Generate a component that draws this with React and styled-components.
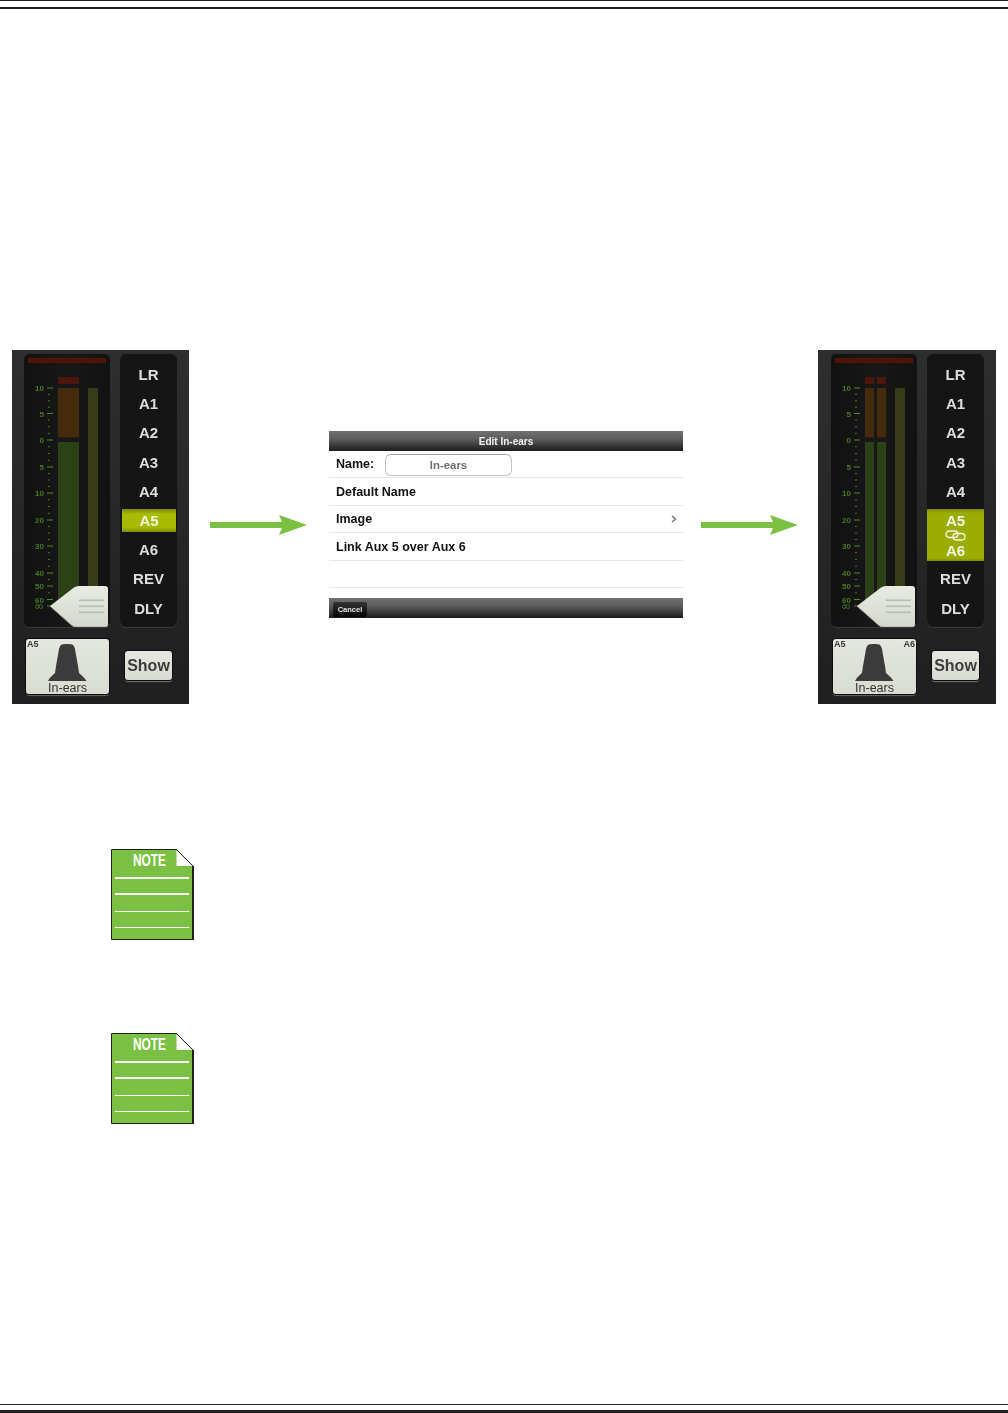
import React from "react";
import styled, { createGlobalStyle } from "styled-components";

const Global = createGlobalStyle`
  html, body {
    margin: 0;
    padding: 0;
    background: #fff;
    font-family: "Liberation Sans", Arial, sans-serif;
  }
`;

const SCALE = [
  ["10", 34],
  ["5", 59.5],
  ["0", 86],
  ["5", 113],
  ["10", 139],
  ["20", 166],
  ["30", 192],
  ["40", 219],
  ["50", 232],
  ["60", 245.5],
];

function minorTicks() {
  const out = [];
  for (let i = 0; i < SCALE.length - 1; i++) {
    const from = SCALE[i][1];
    const to = SCALE[i + 1][1];
    const count = to - from > 20 ? 3 : 1;
    for (let n = 1; n <= count; n++) {
      out.push(from + ((to - from) * n) / (count + 1));
    }
  }
  return out;
}

function Meter({ stereo }) {
  const bars = stereo ? [[34, 9], [46, 9]] : [[34, 21]];
  const knob = stereo ? "knobB" : "knobA";
  return (
    <MeterBox>
      <svg width="86" height="273" viewBox="0 0 86 273">
        <defs>
          <linearGradient id={knob} x1="0" y1="0" x2="0" y2="1">
            <stop offset="0" stopColor="#e9ece4" />
            <stop offset="1" stopColor="#d3d7cd" />
          </linearGradient>
        </defs>
        <rect x="4" y="4" width="78" height="5" fill="#4c1508" />
        {bars.map(([x, w]) => (
          <g key={x}>
            <rect x={x} y="23" width={w} height="7" fill="#4b180b" />
            <rect x={x} y="34" width={w} height="49.5" fill="#452a0c" />
            <rect x={x} y="88" width={w} height="160" fill="#2d4116" />
          </g>
        ))}
        <rect x="64" y="34" width="10" height="200" fill="#383b18" />
        {SCALE.map(([label, y], i) => (
          <g key={i}>
            <text x="20" y={y + 3} textAnchor="end" fontSize="8" fontWeight="700" fill="#4a7a20" fontFamily="Liberation Sans">
              {label}
            </text>
            <rect x="23" y={y - 0.5} width="6" height="1" fill="#558a26" />
          </g>
        ))}
        {minorTicks().map((y) => (
          <rect key={y} x="24" y={y - 0.5} width="2" height="1" fill="#4a7a20" />
        ))}
        <text x="20" y="256" textAnchor="end" fontSize="12" fill="#4a7a20" fontFamily="DejaVu Sans">
          ∞
        </text>
        <rect x="23" y="251.5" width="4" height="1" fill="#558a26" />
        <path
          d="M26 252 L50 233.5 Q52 232 55 232 H81 Q84 232 84 235 V270 Q84 273 81 273 H52 Q50 273 48 271.5 Z"
          fill={`url(#${knob})`}
        />
        <path d="M26.5 252.5 L48 271.5 Q50 273 52 273 H81 Q84 273 84 270" fill="none" stroke="#a8aca2" strokeWidth="1" />
        <rect x="55" y="245.5" width="25" height="1.6" fill="#b7bbb1" />
        <rect x="55" y="251.5" width="25" height="1.6" fill="#b7bbb1" />
        <rect x="55" y="257.5" width="25" height="1.6" fill="#b7bbb1" />
      </svg>
    </MeterBox>
  );
}

function Silhouette() {
  return (
    <svg width="39" height="37" viewBox="0 0 39 37">
      <path
        d="M13 1 Q14 0 19 0 Q24 0 25 1 Q27 3 27.5 8 L30 22 L31 29 C33 31 36 33 38.5 37 H0 C2 33 5 31 7 29 L8 22 L10.5 8 Q11 3 13 1 Z"
        fill="#3b3b3b"
      />
    </svg>
  );
}

function LinkGlyph() {
  return (
    <svg width="21" height="11" viewBox="0 0 21 11">
      <rect x="1" y="1" width="12" height="6.5" rx="3.2" fill="none" stroke="#f4f6e4" strokeWidth="1.3" />
      <rect x="8" y="3.5" width="12" height="6.5" rx="3.2" fill="none" stroke="#f4f6e4" strokeWidth="1.3" />
    </svg>
  );
}

function Mixer({ stereo }) {
  const before = ["LR", "A1", "A2", "A3", "A4"];
  const after = stereo ? ["REV", "DLY"] : ["A6", "REV", "DLY"];
  return (
    <Panel $wide={stereo}>
      <Meter stereo={stereo} />
      <Strip>
        {before.map((c) => (
          <Channel key={c}>{c}</Channel>
        ))}
        {stereo ? (
          <LinkedChannel>
            <span>A5</span>
            <LinkGlyph />
            <span>A6</span>
          </LinkedChannel>
        ) : (
          <ActiveChannel>A5</ActiveChannel>
        )}
        {after.map((c) => (
          <Channel key={c}>{c}</Channel>
        ))}
      </Strip>
      <Thumb>
        <ThumbTag>A5</ThumbTag>
        {stereo && <ThumbTag $right>A6</ThumbTag>}
        <Silhouette />
        <ThumbName>In-ears</ThumbName>
      </Thumb>
      <ShowButton>Show</ShowButton>
    </Panel>
  );
}

function Arrow({ gap }) {
  return (
    <ArrowWrap $gap={gap}>
      <svg width="97" height="22" viewBox="0 0 97 22">
        <path d="M0 8 H72 L69 1 L97 11 L69 21 L72 14 H0 Z" fill="#7ac143" />
      </svg>
    </ArrowWrap>
  );
}

function EditDialog() {
  return (
    <Dialog>
      <DialogBar>Edit In-ears</DialogBar>
      <Row $h={27}>
        <RowLabel>Name:</RowLabel>
        <NameField>In-ears</NameField>
      </Row>
      <Row $low>
        <RowLabel>Default Name</RowLabel>
      </Row>
      <Row $low>
        <RowLabel>Image</RowLabel>
        <Chevron width="6" height="8" viewBox="0 0 6 8">
          <path d="M1 1 L4.5 4 L1 7" fill="none" stroke="#777" strokeWidth="1.5" />
        </Chevron>
      </Row>
      <Row $low>
        <RowLabel>Link Aux 5 over Aux 6</RowLabel>
      </Row>
      <Row />
      <DialogGap />
      <DialogFoot>
        <CancelButton>Cancel</CancelButton>
      </DialogFoot>
    </Dialog>
  );
}

function NoteIcon() {
  return (
    <NoteWrap>
      <svg width="84" height="92" viewBox="0 0 84 92">
        <path d="M0.5 0.5 H65.5 L82 17 V90.5 H0.5 Z" fill="#7ac143" stroke="#231f20" strokeWidth="1" />
        <path d="M65.5 1 V17 H81.5 Z" fill="#fff" />
        <path d="M65.5 0.5 L82 17" stroke="#231f20" strokeWidth="1" />
        <rect x="81" y="17" width="2" height="74" fill="#231f20" />
        <rect x="4" y="28" width="74" height="2" fill="#fff" />
        <rect x="4" y="44" width="74" height="2" fill="#fff" />
        <rect x="4" y="62" width="74" height="1" fill="#fff" />
        <rect x="4" y="78" width="74" height="1" fill="#fff" />
        <text
          x="22"
          y="17"
          fontSize="16"
          fontWeight="700"
          fill="#fff"
          fontFamily="Liberation Sans Narrow, Liberation Sans, sans-serif"
          textLength="33"
          lengthAdjust="spacingAndGlyphs"
        >
          NOTE
        </text>
      </svg>
    </NoteWrap>
  );
}

export default function App() {
  return (
    <Page>
      <Global />
      <ThinRule />
      <ThickRule $top={6} $h={2} />
      <Diagram>
        <Mixer />
        <Arrow gap={21} />
        <EditDialog />
        <Arrow gap={18} />
        <RightSlot>
          <Mixer stereo />
        </RightSlot>
      </Diagram>
      <Notes>
        <NoteIcon />
        <NoteIcon />
      </Notes>
      <Footer>
        <ThinRule />
        <ThickRule $top={5} $h={3} />
      </Footer>
    </Page>
  );
}

const Page = styled.div`
  width: 1008px;
  height: 1413px;
  overflow: hidden;
  display: flex;
  flex-direction: column;
  background: #fff;
`;

const ThinRule = styled.div`
  height: 1px;
  background: #231f20;
`;

const ThickRule = styled.div`
  height: ${(p) => p.$h}px;
  margin-top: ${(p) => p.$top}px;
  background: #231f20;
`;

const Diagram = styled.div`
  display: flex;
  align-items: flex-start;
  margin-top: 341px;
  padding-left: 12px;
`;

const RightSlot = styled.div`
  margin-left: 20px;
`;

const Panel = styled.div`
  width: ${(p) => (p.$wide ? 178 : 177)}px;
  height: 354px;
  box-sizing: border-box;
  padding: 4px 0 0 ${(p) => (p.$wide ? 13 : 12)}px;
  display: grid;
  grid-template-columns: 86px 57px;
  grid-template-rows: 273px auto;
  column-gap: 10px;
  row-gap: 12px;
  background: linear-gradient(180deg, #2e2e2e 0%, #272727 50%, #1f1f1f 100%);
  filter: blur(0.35px);
`;

const MeterBox = styled.div`
  width: 86px;
  height: 273px;
  border-radius: 5px;
  background: linear-gradient(90deg, #111, #181818 50%, #121212);
  box-shadow: 0 1px 0 #3a3a3a;
  svg {
    display: block;
  }
`;

const Strip = styled.div`
  box-sizing: border-box;
  height: 273px;
  padding-top: 6px;
  display: flex;
  flex-direction: column;
  border-radius: 6px;
  background: #151515;
  box-shadow: 0 1px 0 #3a3a3a;
`;

const Channel = styled.div`
  height: 29.2px;
  flex: none;
  display: flex;
  align-items: center;
  justify-content: center;
  font-size: 15px;
  font-weight: 700;
  color: #dededa;
`;

const ActiveChannel = styled(Channel)`
  margin: 0 1px 0 2px;
  color: #f1f4da;
  background: linear-gradient(180deg, #7c8a04 0%, #a8bc00 22%, #a6ba00 80%, #7f8e04 100%) center / 100% 23px no-repeat;
`;

const LinkedChannel = styled.div`
  height: 58.4px;
  flex: none;
  display: flex;
  flex-direction: column;
  align-items: center;
  justify-content: center;
  gap: 2px;
  font-size: 15px;
  font-weight: 700;
  line-height: 15px;
  color: #f4f6e4;
  background: linear-gradient(180deg, #7f8e04 0%, #9bad00 8%, #9bad00 94%, #7f8e04 100%) center / 100% 52px no-repeat;
`;

const Thumb = styled.div`
  position: relative;
  width: 83px;
  height: 55px;
  margin: 0 0 0 2px;
  box-sizing: border-box;
  padding-top: 5px;
  display: flex;
  flex-direction: column;
  align-items: center;
  border-radius: 3px;
  background: linear-gradient(180deg, #e4e7df, #d8dcd2);
  box-shadow: 0 0 0 1px #0c0c0c, 0 2px 1px #666;
  svg {
    display: block;
    flex: none;
  }
`;

const ThumbTag = styled.span`
  position: absolute;
  top: 0;
  ${(p) => (p.$right ? "right: 1px;" : "left: 1px;")}
  font-size: 9px;
  font-weight: 700;
  color: #3a3a3a;
`;

const ThumbName = styled.span`
  font-size: 12.5px;
  line-height: 12px;
  margin-top: 1px;
  color: #333;
`;

const ShowButton = styled.div`
  width: 47px;
  height: 29px;
  margin: 12px 0 0 5px;
  display: flex;
  align-items: center;
  justify-content: center;
  border-radius: 3px;
  font-size: 16px;
  font-weight: 700;
  color: #3c3c3c;
  background: linear-gradient(180deg, #e6e9e1, #d6dad0);
  box-shadow: 0 0 0 1px #0c0c0c, 0 2px 1px #777;
`;

const ArrowWrap = styled.div`
  margin: 164px 0 0 ${(p) => p.$gap}px;
  svg {
    display: block;
  }
`;

const Dialog = styled.div`
  width: 354px;
  height: 187px;
  margin: 81px 0 0 22px;
  display: flex;
  flex-direction: column;
  background: #fff;
  filter: blur(0.35px);
`;

const DialogBar = styled.div`
  height: 20px;
  flex: none;
  display: flex;
  align-items: center;
  justify-content: center;
  font-size: 10px;
  font-weight: 700;
  color: #f2f2f2;
  background: linear-gradient(180deg, #707070 0%, #5c5c5c 40%, #3c3c3c 70%, #1c1c1c 100%);
`;

const Row = styled.div`
  height: ${(p) => p.$h || 27.5}px;
  flex: none;
  box-sizing: border-box;
  display: flex;
  align-items: center;
  justify-content: space-between;
  padding: ${(p) => (p.$low ? 1 : 0)}px 6px 0 7px;
  border-bottom: 1px solid #e6e6e6;
`;

const RowLabel = styled.span`
  font-size: 12.5px;
  font-weight: 700;
  color: #111;
`;

const NameField = styled.div`
  flex: none;
  width: 127px;
  height: 22px;
  margin: 1px 165px 0 0;
  box-sizing: border-box;
  display: flex;
  align-items: center;
  justify-content: center;
  font-size: 11.4px;
  font-weight: 700;
  color: #6e6e6e;
  border: 1px solid #c4c4c4;
  border-top-color: #a0a0a0;
  border-radius: 6px;
`;

const Chevron = styled.svg`
  display: block;
`;

const DialogGap = styled.div`
  flex: 1;
`;

const DialogFoot = styled(DialogBar)`
  justify-content: flex-start;
  padding-left: 4px;
`;

const CancelButton = styled.div`
  width: 34px;
  height: 15px;
  margin-top: 2px;
  display: flex;
  align-items: center;
  justify-content: center;
  border-radius: 2px;
  font-size: 7.5px;
  font-weight: 700;
  color: #e4e4e4;
  background: linear-gradient(180deg, #333, #050505);
`;

const Notes = styled.div`
  display: flex;
  flex-direction: column;
  gap: 92px;
  margin-top: 145px;
  padding-left: 111px;
`;

const NoteWrap = styled.div`
  width: 84px;
  height: 92px;
  svg {
    display: block;
  }
`;

const Footer = styled.div`
  margin-top: auto;
`;
